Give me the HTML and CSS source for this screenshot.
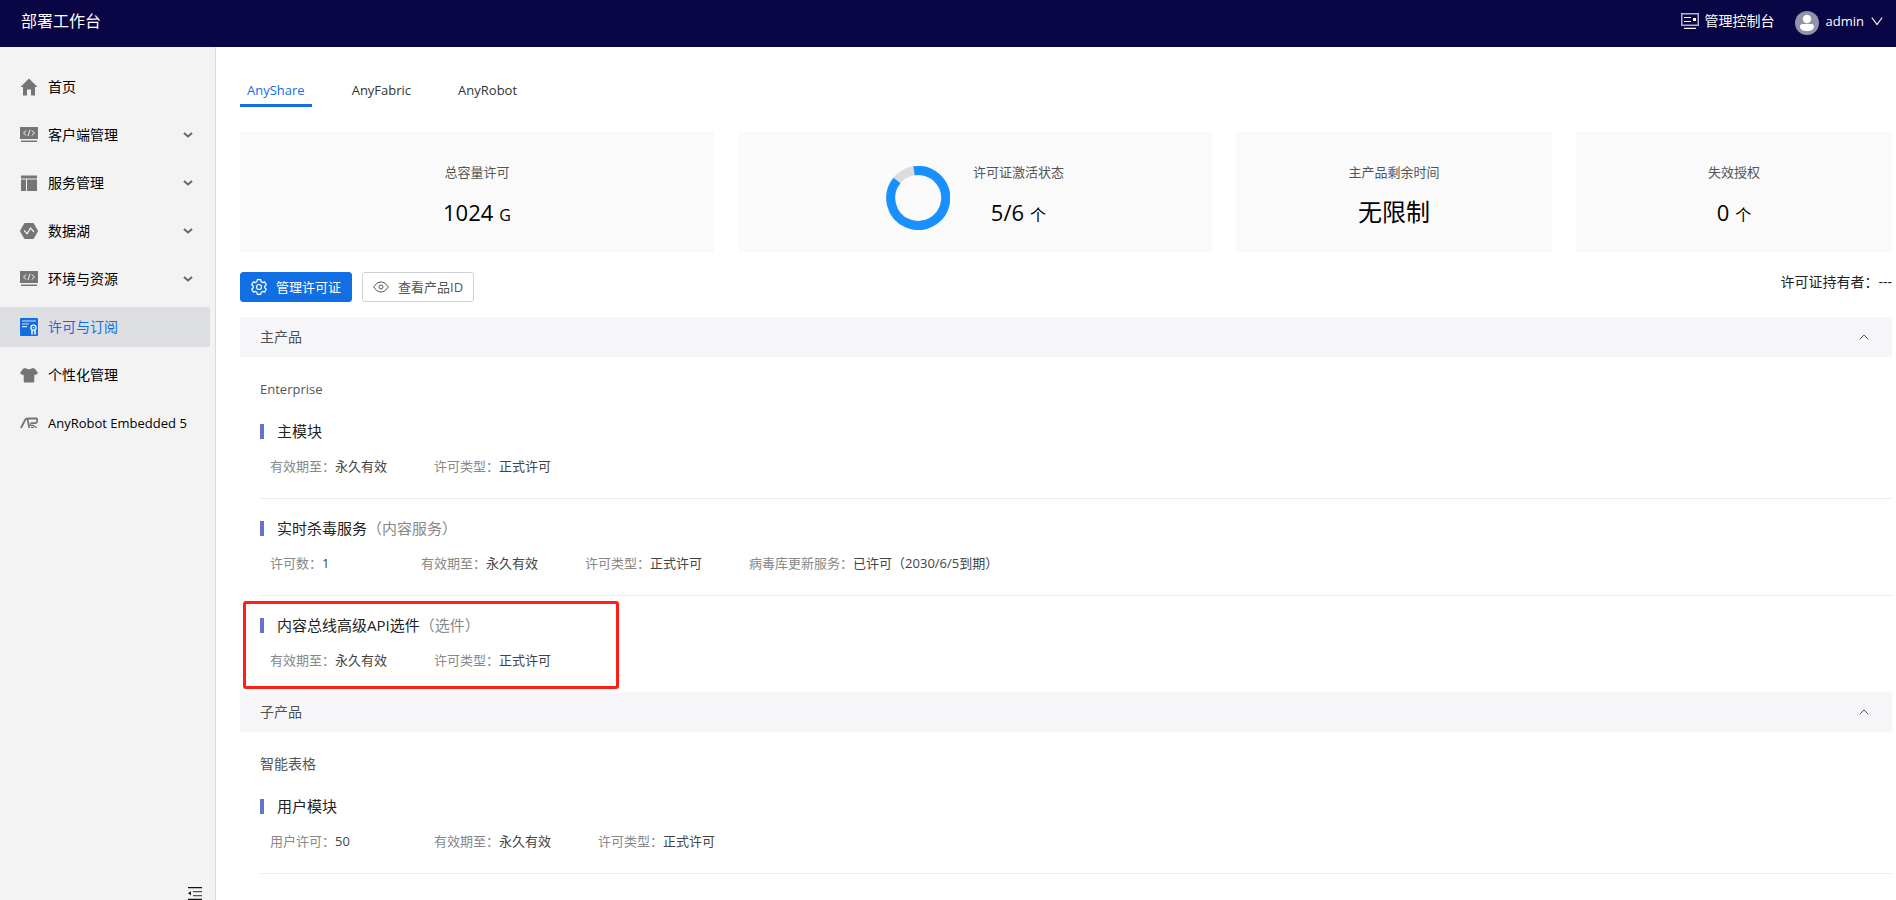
FILE: index.html
```html
<!DOCTYPE html>
<html lang="zh-CN">
<head>
<meta charset="utf-8">
<title>部署工作台</title>
<meta name="viewport" content="width=device-width, initial-scale=1">
<link rel="stylesheet" href="styles.css">
</head>
<body>
<header class="topbar">
  <h1 class="topbar-title">部署工作台</h1>
  <div class="topbar-actions">
    <a class="topbar-link" href="#console">
      <svg width="18" height="16" viewBox="0 0 18 16" fill="none" stroke="#fff"><rect x=".75" y=".75" width="16.5" height="11.5" stroke-width="1.5" opacity=".7"/><path d="M3 4.5h7M3 8.5h7M3 15.3h12" stroke-width="1.2"/><rect x="12" y="5" width="3" height="3" fill="#fff" stroke="none"/></svg>
      <span>管理控制台</span>
    </a>
    <button class="user-menu" type="button">
      <svg width="24" height="24" viewBox="0 0 24 24"><circle cx="12" cy="12" r="12" fill="#8f93ab"/><circle cx="12" cy="8" r="4.2" fill="#fff"/><path d="M5 15.500c0-2 1.300-2.500 3.500-2.500h7c2.200 0 3.500.5 3.500 2.500 0 3.200-3 4.500-7 4.500s-7-1.300-7-4.500z" fill="#fff"/></svg>
      <span class="latin">admin</span>
      <svg width="12" height="20" viewBox="0 0 12 20" fill="none" stroke="#fff" stroke-width="1.200"><path d="M.8 6.500L6 13.500l5.200-7"/></svg>
    </button>
  </div>
</header>

<div class="layout">
  <aside class="sidebar">
    <nav class="menu">
      <a class="menu-item" href="#home">
        <svg class="menu-icon" viewBox="0 0 18 18"><path d="M9 .5L.500 9H3v8.500h4V11.500h4v6h4V9h2.500z" fill="#757575"/></svg>
        <span>首页</span>
      </a>
      <a class="menu-item" href="#client">
        <svg class="menu-icon" viewBox="0 0 18 18"><path d="M0 1h18v12H0zM1 14.600h16v1.400H1z" fill="#757575"/><path d="M6.300 4.500L3.500 7l2.800 2.500M11.700 4.500L14.500 7l-2.800 2.500M9.900 3.800L8.100 10.200" fill="none" stroke="#f3f3f3"/></svg>
        <span>客户端管理</span>
        <svg class="menu-arrow" viewBox="0 0 10 6"><path d="M1 1l4 3.500L9 1"/></svg>
      </a>
      <a class="menu-item" href="#service">
        <svg class="menu-icon" viewBox="0 0 18 18"><path d="M1 1.500h16v3H1zM1 5.500h5v11.500H1zM7 5.500h10v11.500H7z" fill="#757575"/></svg>
        <span>服务管理</span>
        <svg class="menu-arrow" viewBox="0 0 10 6"><path d="M1 1l4 3.500L9 1"/></svg>
      </a>
      <a class="menu-item" href="#datalake">
        <svg class="menu-icon" viewBox="0 0 18 18"><path d="M5 1h8q.6 0 1 .7l3.700 6.500q.4.800 0 1.600L14 16.300q-.4.700-1 .7H5q-.6 0-1-.7L.3 9.800q-.4-.8 0-1.600L4 1.700Q4.400 1 5 1z" fill="#757575"/><path d="M4 8.500l3.200 3.200L10.500 6l3.500 4" fill="none" stroke="#f3f3f3" stroke-width="1.200"/></svg>
        <span>数据湖</span>
        <svg class="menu-arrow" viewBox="0 0 10 6"><path d="M1 1l4 3.500L9 1"/></svg>
      </a>
      <a class="menu-item" href="#resources">
        <svg class="menu-icon" viewBox="0 0 18 18"><path d="M0 1h18v12H0zM1 14.600h16v1.400H1z" fill="#757575"/><path d="M6.300 4.500L3.500 7l2.800 2.500M11.700 4.500L14.500 7l-2.800 2.500M9.900 3.800L8.100 10.200" fill="none" stroke="#f3f3f3"/></svg>
        <span>环境与资源</span>
        <svg class="menu-arrow" viewBox="0 0 10 6"><path d="M1 1l4 3.500L9 1"/></svg>
      </a>
      <a class="menu-item menu-item-active" href="#license" aria-current="page">
        <svg class="menu-icon" viewBox="0 0 18 18"><rect width="18" height="18" rx="1" fill="#126ee3"/><path d="M2 3h14M2 6h7M2 8.700h5" stroke="#dddfe4" fill="none" stroke-width="1.200"/><path d="M12 12.500v4M15 12.500v4" stroke="#fff" fill="none" stroke-width="1.500"/><circle cx="13.500" cy="9.800" r="2.600" fill="#126ee3" stroke="#fff" stroke-width="1.200"/><circle cx="13.500" cy="9.800" r=".8" fill="#fff"/></svg>
        <span>许可与订阅</span>
      </a>
      <a class="menu-item" href="#personalize">
        <svg class="menu-icon" viewBox="0 0 18 18"><path d="M5.500 2Q9 4.500 12.500 2l2.500.8L18 7l-2.600 2.300L14.300 8.500V15.500q0 1-1 1H4.700q-1 0-1-1V8.500L2.600 9.300 0 7l3-4.200z" fill="#757575"/></svg>
        <span>个性化管理</span>
      </a>
      <a class="menu-item" href="#anyrobot">
        <svg class="menu-icon" viewBox="0 0 18 18" fill="none" stroke="#757575"><path d="M1 14L5.300 5.500Q5.800 4.600 6.600 4.600T7.600 5.800L9.300 14M7.500 4.500H16Q17.300 4.500 17.300 6.500T15.500 9.200H10.500" stroke-width="1.800"/><path d="M10.300 9.500v1.800h3l3.500 2.400M11 13.400h3" stroke-width="1.300"/></svg>
        <span class="latin">AnyRobot Embedded 5</span>
      </a>
    </nav>
    <button class="collapse" type="button" aria-label="收起菜单">
      <svg width="16" height="14" viewBox="0 0 16 14"><path d="M1 1h14v1.200H1zM1 12.800h14V14H1z" fill="#111"/><path d="M6 5h9v1.300H6zM6 9h9v1.300H6z" fill="#555"/><path d="M4 5.300v4L1 7.300z" fill="#111"/></svg>
    </button>
  </aside>

  <main class="content">
    <div class="tabs" role="tablist">
      <button class="tab latin tab-active" type="button" role="tab" aria-selected="true">AnyShare</button>
      <button class="tab latin" type="button" role="tab" aria-selected="false">AnyFabric</button>
      <button class="tab latin" type="button" role="tab" aria-selected="false">AnyRobot</button>
    </div>

    <div class="cards">
      <section class="card">
        <div class="stat"><h2 class="stat-label">总容量许可</h2><p class="stat-value"><span class="stat-number">1024</span><span class="stat-unit">G</span></p></div>
      </section>
      <section class="card">
        <svg width="64" height="64" viewBox="0 0 64 64" fill="none" stroke-width="9"><circle cx="32" cy="32" r="27.500" stroke="#dcdcdc"/><path d="M28 4.800A27.500 27.500 0 1 1 11 14.500" stroke="#1890ff"/></svg>
        <div class="stat"><h2 class="stat-label">许可证激活状态</h2><p class="stat-value"><span class="stat-number">5/6</span><span class="stat-unit">个</span></p></div>
      </section>
      <section class="card">
        <div class="stat"><h2 class="stat-label">主产品剩余时间</h2><p class="stat-value">无限制</p></div>
      </section>
      <section class="card">
        <div class="stat"><h2 class="stat-label">失效授权</h2><p class="stat-value"><span class="stat-number">0</span><span class="stat-unit">个</span></p></div>
      </section>
    </div>

    <div class="toolbar">
      <button class="btn btn-primary" type="button">
        <svg width="16" height="16" viewBox="0 0 16 16" fill="none" stroke="currentColor" stroke-width="1.200" stroke-linejoin="round"><path d="M6.300.7h3.400l.5 2.100 1.300.8 2.100-.7 1.700 2.900L13.700 7.300v1.400l1.600 1.500-1.700 2.900-2.100-.7-1.300.8-.5 2.100H6.300l-.5-2.100-1.300-.8-2.100.7L.7 10.200 2.300 8.700V7.300L.7 5.800l1.700-2.900 2.100.7 1.300-.8z"/><circle cx="8" cy="8" r="2.500"/></svg>
        <span>管理许可证</span>
      </button>
      <button class="btn" type="button">
        <svg width="16" height="16" viewBox="0 0 16 16" fill="none" stroke="currentColor"><path d="M.6 8Q3.800 2.800 8 2.800T15.400 8Q12.200 13.200 8 13.200T.6 8z"/><circle cx="8" cy="8" r="2"/></svg>
        <span>查看产品ID</span>
      </button>
      <p class="holder">许可证持有者：---</p>
    </div>

    <section class="product">
      <button class="product-head" type="button" aria-expanded="true">
        <span>主产品</span>
        <svg width="10" height="6" viewBox="0 0 10 6"><path d="M.7 5.300L5 1l4.300 4.300" fill="none" stroke="#555"/></svg>
      </button>
      <div class="product-body">
        <h2 class="product-name latin">Enterprise</h2>
        <article class="module">
          <h3 class="module-title">主模块</h3>
          <dl class="fields">
            <div class="field"><dt>有效期至：</dt><dd>永久有效</dd></div>
            <div class="field"><dt>许可类型：</dt><dd>正式许可</dd></div>
          </dl>
        </article>
        <article class="module">
          <h3 class="module-title">实时杀毒服务<span class="module-kind">（内容服务）</span></h3>
          <dl class="fields">
            <div class="field"><dt>许可数：</dt><dd>1</dd></div>
            <div class="field"><dt>有效期至：</dt><dd>永久有效</dd></div>
            <div class="field"><dt>许可类型：</dt><dd>正式许可</dd></div>
            <div class="field"><dt>病毒库更新服务：</dt><dd>已许可（2030/6/5到期）</dd></div>
          </dl>
        </article>
        <article class="module module-marked">
          <h3 class="module-title">内容总线高级API选件<span class="module-kind">（选件）</span></h3>
          <dl class="fields">
            <div class="field"><dt>有效期至：</dt><dd>永久有效</dd></div>
            <div class="field"><dt>许可类型：</dt><dd>正式许可</dd></div>
          </dl>
        </article>
      </div>
    </section>

    <section class="product">
      <button class="product-head" type="button" aria-expanded="true">
        <span>子产品</span>
        <svg width="10" height="6" viewBox="0 0 10 6"><path d="M.7 5.300L5 1l4.300 4.300" fill="none" stroke="#555"/></svg>
      </button>
      <div class="product-body">
        <h2 class="product-name">智能表格</h2>
        <article class="module">
          <h3 class="module-title">用户模块</h3>
          <dl class="fields">
            <div class="field"><dt>用户许可：</dt><dd>50</dd></div>
            <div class="field"><dt>有效期至：</dt><dd>永久有效</dd></div>
            <div class="field"><dt>许可类型：</dt><dd>正式许可</dd></div>
          </dl>
        </article>
      </div>
    </section>
  </main>
</div>
</body>
</html>
```

FILE: styles.css
```css
*,
*::before,
*::after {
  box-sizing: border-box;
}

body {
  margin: 0;
  min-height: 100vh;
  display: flex;
  flex-direction: column;
  font: 14px/20px "Open Sans", "Noto Sans CJK SC", sans-serif;
  color: #000;
  background: #fff;
}

h1, h2, h3, p, dl, dd {
  margin: 0;
  font-weight: 400;
}

button {
  font: inherit;
  color: inherit;
  background: none;
  border: 0;
  padding: 0;
  cursor: pointer;
}

a {
  color: inherit;
  text-decoration: none;
}

svg {
  flex: none;
}

/* Labels set only in Latin letters */
.latin {
  font-size: 13px;
}

/* Top bar */
.topbar {
  display: flex;
  align-items: flex-start;
  justify-content: space-between;
  height: 47px;
  padding: 11px 13px 0 21px;
  color: #fff;
  background: #0a0544;
}

.topbar-title {
  font-size: 16px;
}

.topbar-actions {
  display: flex;
  align-items: flex-start;
  gap: 20px;
}

.topbar-link {
  display: flex;
  align-items: center;
  gap: 6px;
}

.user-menu {
  display: flex;
  align-items: flex-start;
  gap: 7px;
}

/* Layout */
.layout {
  flex: 1;
  display: flex;
}

.sidebar {
  flex: none;
  width: 216px;
  display: flex;
  flex-direction: column;
  justify-content: space-between;
  padding-top: 20px;
  background: #f3f3f3;
  border-right: 1px solid #dcdcdc;
}

.menu {
  display: flex;
  flex-direction: column;
  gap: 8px;
  padding-right: 5px;
}

.menu-item {
  display: flex;
  align-items: center;
  gap: 10px;
  height: 40px;
  padding: 0 17px 0 20px;
  border-radius: 0 2px 2px 0;
  white-space: nowrap;
}

.menu-item-active {
  color: #126ee3;
  background: #dddee2;
}

.menu-icon {
  width: 18px;
  height: 18px;
}

.menu-arrow {
  width: 10px;
  height: 6px;
  margin-left: auto;
  fill: none;
  stroke: #666;
  stroke-width: 2;
}

.collapse {
  display: flex;
  align-self: flex-end;
  margin-right: 12px;
}

.content {
  flex: 1;
  min-width: 0;
  padding: 33px 4px 0 24px;
}

/* Tabs */
.tabs {
  display: flex;
  gap: 33px;
}

.tab {
  padding: 0 7px 4px;
  color: #333;
  border-bottom: 3px solid transparent;
}

.tab-active {
  color: #126ee3;
  border-bottom-color: #126ee3;
}

/* Summary cards */
.cards {
  display: grid;
  grid-template-columns: 3fr 3fr 2fr 2fr;
  gap: 24px;
  margin-top: 25px;
}

.card {
  display: flex;
  justify-content: center;
  align-items: center;
  gap: 23px;
  height: 120px;
  padding-top: 11px;
  background: #fafafa;
}

.stat {
  display: flex;
  flex-direction: column;
  align-items: center;
  gap: 12px;
  padding-bottom: 4px;
}

.stat-label {
  font-size: 13px;
  color: #555;
}

.stat-value {
  display: flex;
  align-items: baseline;
  gap: 6px;
  height: 36px;
  font-size: 24px;
  line-height: 36px;
}

.stat-number {
  font-size: 22px;
}

.stat-unit {
  font-size: 16px;
}

/* Toolbar */
.toolbar {
  display: flex;
  gap: 10px;
  margin: 20px 0 15px;
}

.btn {
  display: flex;
  align-items: center;
  gap: 9px;
  height: 30px;
  padding: 0 10px;
  font-size: 13px;
  color: #555;
  background: #fff;
  border: 1px solid #d0d0da;
  border-radius: 3px;
}

.btn-primary {
  color: #fff;
  background: #126ee3;
  border-color: #126ee3;
}

.holder {
  margin-left: auto;
  color: #222;
}

/* Products */
.product-head {
  display: flex;
  align-items: center;
  justify-content: space-between;
  width: 100%;
  height: 40px;
  padding: 0 23px 0 20px;
  color: #505050;
  background: #f6f6f9;
}

.product-body {
  padding-left: 20px;
}

.product-name {
  padding: 22px 0 3px;
  font-size: 14px;
  color: #555;
}

.product-name.latin {
  font-size: 13px;
}

.module {
  position: relative;
  display: flex;
  flex-direction: column;
  gap: 15px;
  padding: 19px 0 22px;
  border-bottom: 1px solid #ececec;
}

.module-title {
  display: flex;
  align-items: center;
  font-size: 15px;
  color: #222;
}

.module-title::before {
  content: "";
  width: 4px;
  height: 15px;
  margin-right: 13px;
  background: #6673cb;
}

.module-kind {
  color: #888;
}

.fields {
  display: flex;
  gap: 47px;
  padding-left: 10px;
  font-size: 13px;
}

.field {
  display: flex;
  color: #888;
}

.field dd {
  min-width: 52px;
  color: #444;
}

.module-marked {
  border-bottom: 0;
}

.module-marked::after {
  content: "";
  position: absolute;
  left: -17px;
  top: 5px;
  width: 376px;
  height: 88px;
  border: 3px solid #ff1f14;
  border-radius: 3px;
  pointer-events: none;
}
```
